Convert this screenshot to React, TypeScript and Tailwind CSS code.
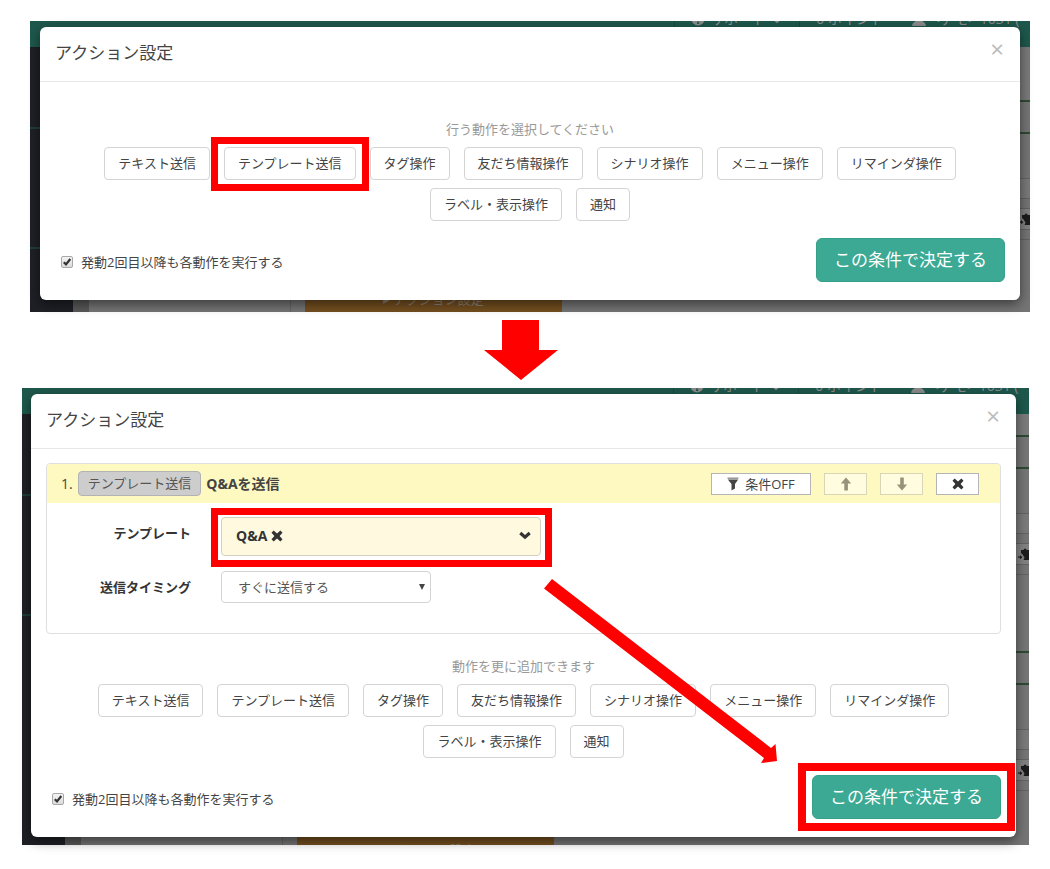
import React from 'react'

const actions = [
  'テキスト送信',
  'テンプレート送信',
  'タグ操作',
  '友だち情報操作',
  'シナリオ操作',
  'メニュー操作',
  'リマインダ操作',
  'ラベル・表示操作',
  '通知',
]

const RemoveIcon = () => (
  <svg viewBox="0 0 12 12" className="w-3 h-3 inline-block" fill="currentColor" aria-hidden="true">
    <path d="M2.6.6 6 3.5 9.4.6l2.1 2.2L8.6 6l2.9 3.2-2.1 2.2L6 8.5l-3.4 2.9L.5 9.2 3.4 6 .5 2.8z" />
  </svg>
)

const FilterIcon = () => (
  <svg viewBox="0 0 12 14" className="w-3 h-[14px]" fill="currentColor" aria-hidden="true">
    <path d="M.5.5h11v1.4H.5z" opacity=".6" />
    <path d="M.8 2.4h10.4L8 7v4.6l-3.5 2V7z" />
  </svg>
)

const ArrowUpIcon = () => (
  <svg viewBox="0 0 12 14" className="w-3 h-[14px]" fill="currentColor" aria-hidden="true">
    <path d="M6 .4 11.2 6.6H7.9v7H4.3v-7H.8z" />
  </svg>
)

const ArrowDownIcon = () => (
  <svg viewBox="0 0 12 14" className="w-3 h-[14px]" fill="currentColor" aria-hidden="true">
    <path d="M6 13.6.8 7.4h3.4v-7h3.6v7h3.4z" />
  </svg>
)

const ChevronIcon = () => (
  <svg viewBox="0 0 12 9" className="w-3 h-[9px]" fill="none" stroke="currentColor" strokeWidth="3.2" aria-hidden="true">
    <path d="M1.3 2 6 6.2 10.7 2" />
  </svg>
)

const HelpIcon = () => (
  <svg viewBox="0 0 14 14" className="w-[14px] h-[14px]" aria-hidden="true">
    <circle cx="7" cy="7" r="6.5" fill="#8b8b8b" />
    <path d="M6 6.6h2.2v3H6zM6 10.3h2.2v1.8H6z" fill="#1e584c" />
  </svg>
)

const UserIcon = () => (
  <svg viewBox="0 0 14 14" className="w-[14px] h-[14px]" fill="#8b8b8b" aria-hidden="true">
    <circle cx="7" cy="4" r="3.6" />
    <path d="M0 14c0-3 3-4 5-6h4c2 2 5 3 5 6z" />
  </svg>
)

const PasteIcon = () => (
  <svg viewBox="0 0 11 12" className="w-[11px] h-3" fill="#1c1c1c" aria-hidden="true">
    <path d="M3 2h2.6a1.5 1.5 0 0 1 3 0H11v10H5.5l1-2.5-2.1-3.3L3 5z" />
    <path d="M0 8.4h2V7l2.4 2.2-2.4 2V9.8H0z" />
  </svg>
)

const TableRows = () => (
  <div className="shrink-0">
    <div className="h-8 border-t-2 border-[#2f4a31]"></div>
    <div className="h-[46px] border-t-2 border-[#2f4a31]"></div>
    <div className="h-5 border-t border-[#636363] bg-[#7a7a7a]"></div>
    <div className="h-[10px] border-t border-[#636363]"></div>
    <div className="h-[22px] border-y border-[#636363] bg-[#828282] flex items-center justify-end">
      <PasteIcon />
    </div>
    <div className="h-[10px] border-b border-[#636363]"></div>
    <div className="h-[76px]"></div>
  </div>
)

type BackdropProps = {
  lead: string
  labelPad: string
}

// dimmed page that sits behind the modal
const Backdrop = ({ lead, labelPad }: BackdropProps) => (
  <div className="absolute inset-0 overflow-hidden flex flex-col bg-[#757575]" aria-hidden="true">
    <div className="h-[26px] shrink-0 bg-[#1e584c] overflow-hidden">
      <div className="-mt-3 flex justify-end items-center text-sm leading-5 text-[#8b8b8b] whitespace-nowrap">
        <span className="flex items-center gap-[5px] border-l border-[#184a40] px-4">
          <HelpIcon />
          サポート
          <ChevronIcon />
        </span>
        <span className="border-l border-[#184a40] px-4">0 ポイント</span>
        <span className="w-[130px] flex items-center gap-1.5 pl-3">
          <UserIcon />
          &lt;デモ&gt; 1631 (
        </span>
      </div>
    </div>
    <div className="flex-1 min-h-0 flex">
      <div className="w-[43px] shrink-0 bg-[#1f2026]">
        <div className="h-[82px] border-b-2 border-[#1e3f3a]"></div>
        <div className="h-[120px] border-b-2 border-[#1e3f3a]"></div>
      </div>
      <div className="flex-1 min-w-0 flex flex-col">
        <div className="flex-1 min-h-0 overflow-hidden flex flex-col">
          <div className={`${lead} shrink-0 bg-[#7a7a7a]`}></div>
          <TableRows />
          <TableRows />
        </div>
        <div className="h-10 shrink-0 overflow-hidden flex">
          <div className="w-4 bg-[#595959]"></div>
          <div className="w-[202px] border-r border-[#646464]"></div>
          <div className="w-[14px]"></div>
          <div className={`w-[257px] bg-[#744f20] text-[13px] leading-5 text-center text-[#8b8173] ${labelPad}`}>
            ▸ アクション設定
          </div>
        </div>
      </div>
    </div>
  </div>
)

const ModalHeader = () => (
  <div className="h-[55px] border-b border-[#e8e8e8] flex items-start justify-between pl-[15px] pr-4">
    <h2 className="text-[17px] leading-6 pt-[14px]">アクション設定</h2>
    <button type="button" aria-label="閉じる" className="text-2xl leading-6 pt-[10px] text-[#bbb] cursor-pointer">
      ×
    </button>
  </div>
)

const Highlight = ({ className }: { className: string }) => (
  <span className={`absolute border-[#ff0000] pointer-events-none ${className}`}></span>
)

const ActionList = ({ highlighted }: { highlighted?: string }) => (
  <div className="mt-2 px-5 flex flex-wrap justify-center gap-x-[14px] gap-y-2">
    {actions.map((name) => (
      <button
        key={name}
        type="button"
        className="relative h-[33px] px-[13px] pb-0.5 border border-[#d4d4d4] rounded bg-white text-[13px] leading-5 cursor-pointer"
      >
        {name}
        {name === highlighted && <Highlight className="-inset-x-[14px] -top-[11px] -bottom-3 z-10 border-[7px]" />}
      </button>
    ))}
  </div>
)

const ModalFooter = ({ id, highlighted }: { id: string; highlighted?: boolean }) => (
  <div className="mt-[17px] pb-[18px] pl-[21px] pr-[15px] flex items-center justify-between">
    <div className="pt-1 flex items-center gap-2">
      <span className="relative flex">
        <input
          id={id}
          type="checkbox"
          defaultChecked
          className="peer appearance-none w-3 h-3 border border-[#a8a8a8] rounded-xs bg-linear-to-b from-[#f4f4f4] to-[#dcdcdc]"
        />
        <svg
          viewBox="0 0 12 12"
          className="absolute inset-0 w-3 h-3 pointer-events-none hidden peer-checked:block"
          fill="none"
          stroke="#333"
          strokeWidth="2.2"
          aria-hidden="true"
        >
          <path d="M2.8 6.2 5 8.4 9.3 3" />
        </svg>
      </span>
      <label htmlFor={id} className="text-[13px] leading-5">
        発動2回目以降も各動作を実行する
      </label>
    </div>
    <button
      type="button"
      className="relative h-11 px-[17px] border border-[#36a089] rounded-md bg-[#3ba993] text-white text-[17px] leading-6 cursor-pointer"
    >
      この条件で決定する
      {highlighted && <Highlight className="-inset-x-[15px] -inset-y-[13px] border-8" />}
    </button>
  </div>
)

const ActionPanel = () => (
  <div className="mt-[14px] mx-[15px] border border-[#dfdfdf] rounded text-[13px] leading-5">
    <div className="h-[39px] pl-[14px] pr-[21px] bg-[#fef9c0] rounded-t flex items-center justify-between">
      <div className="flex items-center gap-[5px]">
        <span className="text-sm leading-5">1.</span>
        <button type="button" className="h-[25px] px-[9px] pb-0.5 border border-[#b3b3b3] rounded bg-[#cdcdcd] text-[#555] cursor-pointer">
          テンプレート送信
        </button>
        <b className="text-sm leading-5">Q&amp;Aを送信</b>
      </div>
      <div className="flex items-center gap-[13px]">
        <button type="button" className="h-[22px] w-[100px] border border-[#b5b5b5] bg-white flex items-center justify-center gap-1.5 cursor-pointer">
          <FilterIcon />
          条件OFF
        </button>
        <button type="button" disabled aria-label="上へ" className="h-[22px] w-[43px] border border-[#d9d6b5] bg-[#fffce0] text-[#96937a] flex items-center justify-center">
          <ArrowUpIcon />
        </button>
        <button type="button" disabled aria-label="下へ" className="h-[22px] w-[43px] border border-[#d9d6b5] bg-[#fffce0] text-[#96937a] flex items-center justify-center">
          <ArrowDownIcon />
        </button>
        <button type="button" aria-label="削除" className="h-[22px] w-[43px] border border-[#b5b5b5] bg-white text-[#333] flex items-center justify-center cursor-pointer">
          <RemoveIcon />
        </button>
      </div>
    </div>
    <div className="pt-[14px] pb-[30px] flex flex-col gap-[15px]">
      <div className="flex items-start gap-[30px]">
        <label htmlFor="template" className="w-36 pt-1.5 text-right font-bold text-[#333]">
          テンプレート
        </label>
        <button
          id="template"
          type="button"
          className="relative w-80 h-[39px] pl-[14px] pr-[9px] pb-0.5 border border-[#d4d0c0] rounded bg-[#fff9e0] flex items-center justify-between text-sm leading-5 font-bold text-[#333] cursor-pointer"
        >
          <span className="flex items-center gap-1">
            Q&amp;A <RemoveIcon />
          </span>
          <ChevronIcon />
          <Highlight className="-left-[11px] -right-3 -top-[10px] -bottom-3 border-[7px]" />
        </button>
      </div>
      <div className="flex items-start gap-[30px]">
        <label htmlFor="timing" className="w-36 pt-1.5 text-right font-bold text-[#333]">
          送信タイミング
        </label>
        <div className="relative">
          <select id="timing" className="appearance-none w-[210px] h-8 pl-4 border border-[#d4d4d4] rounded bg-white text-[#555]">
            <option>すぐに送信する</option>
          </select>
          <svg viewBox="0 0 6 6" className="absolute right-1.5 top-[13px] w-1.5 h-1.5 pointer-events-none" fill="#444" aria-hidden="true">
            <path d="M0 0h6L3 6z" />
          </svg>
        </div>
      </div>
    </div>
  </div>
)

const App = () => {
  return (
    <main className="bg-white text-[#444] pt-[21px] pb-6 font-['Open_Sans','Noto_Sans_CJK_JP',sans-serif]">
      <section className="relative ml-[30px] mr-5 pt-1.5 pb-3 px-[10px]">
        <Backdrop lead="h-[53px]" labelPad="pt-[17px]" />
        <div className="relative bg-white rounded-md shadow-[0_4px_12px_rgba(0,0,0,0.5)]">
          <ModalHeader />
          <p className="pt-[37px] text-center text-[13px] leading-5 text-[#999]">行う動作を選択してください</p>
          <ActionList highlighted="テンプレート送信" />
          <ModalFooter id="repeat-before" />
        </div>
      </section>

      <div className="py-2 pr-2 flex justify-center">
        <svg viewBox="0 0 74 60" className="w-[74px] h-[60px]" fill="#ff0000" aria-hidden="true">
          <path d="M18 0h37v30h19L37 60 0 30h18z" />
        </svg>
      </div>

      <section className="relative ml-[22px] mr-[21px] pt-1.5 pb-2 pl-[9px] pr-[13px]">
        <Backdrop lead="h-[21px]" labelPad="pt-[35px]" />
        <div className="relative bg-white rounded-md shadow-[0_4px_12px_rgba(0,0,0,0.5)]">
          <ModalHeader />
          <ActionPanel />
          <p className="mt-[22px] text-center text-[13px] leading-5 text-[#999]">動作を更に追加できます</p>
          <ActionList />
          <ModalFooter id="repeat-after" highlighted />
          <svg
            viewBox="0 0 234 184"
            className="absolute left-[513px] top-[185px] w-[234px] h-[184px] pointer-events-none"
            fill="#ff0000"
            aria-hidden="true"
          >
            <path d="M0 9.5 8 0 227 169l4.5-4L233 182l-16 2 3-5z" />
          </svg>
        </div>
      </section>
    </main>
  )
}

export default App
